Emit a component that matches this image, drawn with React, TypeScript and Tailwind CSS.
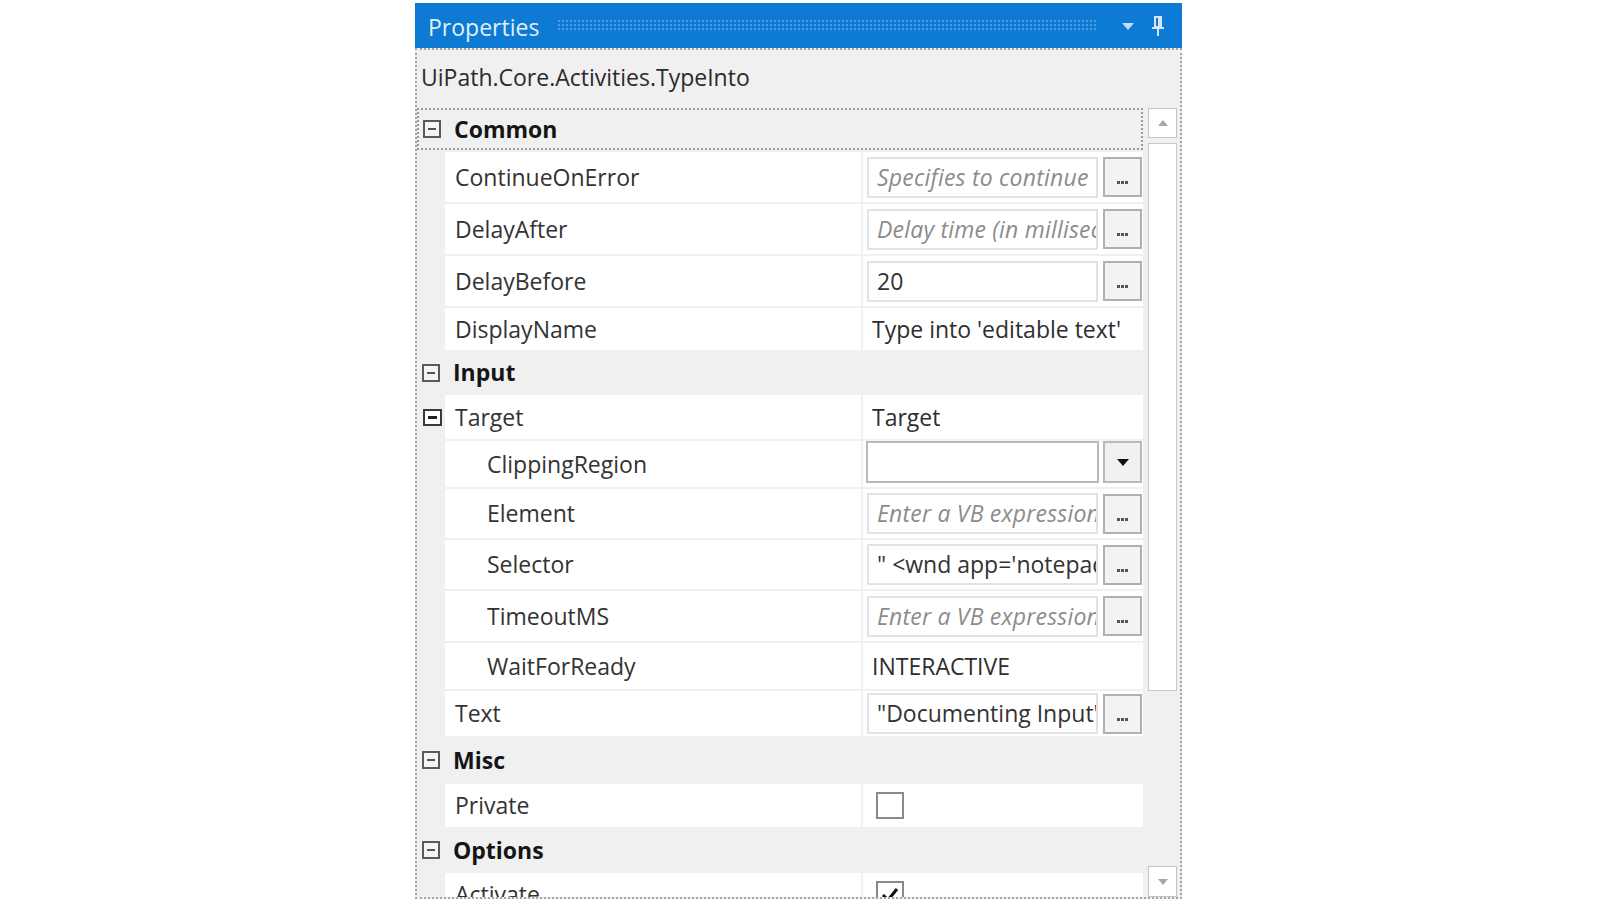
import React from 'react'

type Prop = {
  kind: 'category' | 'prop'
  label: string
  h: number
  nested?: boolean
  expander?: boolean
  focus?: boolean
  value?: React.ReactNode
}

const font = "font-['Open_Sans',sans-serif]"

function Expander({ strong }: { strong?: boolean }) {
  return (
    <div
      className={
        strong
          ? 'w-[19px] h-[17px] border-2 border-[#3a3a3a] bg-white flex items-center justify-center'
          : 'w-[18px] h-[18px] border-2 border-[#5a5a5a] bg-[#f4f4f4] flex items-center justify-center'
      }
    >
      <div className={strong ? 'w-[9px] h-[3px] bg-[#222]' : 'w-[8px] h-[2px] bg-[#555]'} />
    </div>
  )
}

function Dots() {
  return (
    <div className="w-[39px] h-[40px] ml-[5px] bg-[#f3f3f3] border-2 border-[#b0b0b0] flex items-end justify-center pb-[11px] gap-[1px] shrink-0">
      <div className="w-[3px] h-[3px] bg-[#555]" />
      <div className="w-[3px] h-[3px] bg-[#555]" />
      <div className="w-[3px] h-[3px] bg-[#555]" />
    </div>
  )
}

function TextBox({ text, placeholder }: { text: string; placeholder?: boolean }) {
  return (
    <div className="flex items-center ml-[4px]">
      <div className="w-[231px] h-[41px] bg-white border-2 border-[#e3e3e3] pl-[8px] flex items-center overflow-hidden whitespace-nowrap">
        <span className={placeholder ? 'italic text-[#8c8c8c] tracking-[0.2px]' : 'text-[#333]'}>{text}</span>
      </div>
      <Dots />
    </div>
  )
}

function Combo() {
  return (
    <div className="flex items-start ml-[3px] self-start">
      <div className="w-[233px] h-[42px] bg-white border-2 border-[#b9b9b9]" />
      <div className="w-[39px] h-[42px] ml-[4px] bg-[#f1f1f1] border-2 border-[#b9b9b9] flex items-center justify-center">
        <svg width="12" height="7" viewBox="0 0 12 7">
          <path d="M0 0 L12 0 L6 7 Z" fill="#111" />
        </svg>
      </div>
    </div>
  )
}

function Check({ checked }: { checked?: boolean }) {
  return (
    <div className="ml-[13px] w-[28px] h-[27px] bg-white border-2 border-[#8a8a8a] flex items-center justify-center">
      {checked && (
        <svg width="20" height="18" viewBox="0 0 20 18">
          <path d="M3 9 L8 14 L17 3" fill="none" stroke="#111" strokeWidth="3" />
        </svg>
      )}
    </div>
  )
}

function Plain({ text }: { text: string }) {
  return <span className="pl-[9px] text-[#2e2e2e] whitespace-nowrap overflow-hidden">{text}</span>
}

const rows: Prop[] = [
  { kind: 'category', label: 'Common', h: 42, focus: true },
  { kind: 'prop', label: 'ContinueOnError', h: 50, value: <TextBox text="Specifies to continue" placeholder /> },
  { kind: 'prop', label: 'DelayAfter', h: 50, value: <TextBox text="Delay time (in milliseconds)" placeholder /> },
  { kind: 'prop', label: 'DelayBefore', h: 50, value: <TextBox text="20" /> },
  { kind: 'prop', label: 'DisplayName', h: 42, value: <Plain text="Type into 'editable text'" /> },
  { kind: 'category', label: 'Input', h: 41 },
  { kind: 'prop', label: 'Target', h: 44, expander: true, value: <Plain text="Target" /> },
  { kind: 'prop', label: 'ClippingRegion', h: 46, nested: true, value: <Combo /> },
  { kind: 'prop', label: 'Element', h: 49, nested: true, value: <TextBox text="Enter a VB expression" placeholder /> },
  { kind: 'prop', label: 'Selector', h: 49, nested: true, value: <TextBox text={"\" <wnd app='notepad.exe' />"} /> },
  { kind: 'prop', label: 'TimeoutMS', h: 50, nested: true, value: <TextBox text="Enter a VB expression" placeholder /> },
  { kind: 'prop', label: 'WaitForReady', h: 46, nested: true, value: <Plain text="INTERACTIVE" /> },
  { kind: 'prop', label: 'Text', h: 45, value: <TextBox text={'"Documenting Input"'} /> },
  { kind: 'category', label: 'Misc', h: 44 },
  { kind: 'prop', label: 'Private', h: 43, value: <Check /> },
  { kind: 'category', label: 'Options', h: 42 },
  { kind: 'prop', label: 'Activate', h: 43, value: <Check checked /> },
]

function GridRow({ row }: { row: Prop }) {
  if (row.kind === 'category') {
    return (
      <div
        style={{ height: row.h }}
        className={
          row.focus
            ? 'flex items-center shrink-0 border-2 border-dotted border-[#9a9a9a] pl-[4px]'
            : 'flex items-center shrink-0 pl-[5px]'
        }
      >
        <Expander />
        <span className="ml-[13px] font-bold text-[#151515]">{row.label}</span>
      </div>
    )
  }
  return (
    <div style={{ height: row.h }} className="flex shrink-0">
      <div className="w-[28px] flex items-center pl-[6px]">{row.expander && <Expander strong />}</div>
      <div className={'w-[416px] bg-white flex items-center text-[#333] ' + (row.nested ? 'pl-[42px]' : 'pl-[10px]')}>
        {row.label}
      </div>
      <div className="w-[280px] ml-[2px] bg-white flex items-center overflow-hidden">{row.value}</div>
    </div>
  )
}

export default function App() {
  return (
    <div className={'w-[1600px] h-[900px] bg-white overflow-hidden text-[23px] ' + font}>
      <div className="ml-[415px] pt-[3px] w-[767px] h-[899px] flex flex-col">
        {/* title bar */}
        <div className="h-[45px] bg-[#0d7ad3] flex items-center pl-[13px] pr-[18px] shrink-0">
          <span className="text-[#e3eefa] text-[23px] leading-none pt-[3px]">Properties</span>
          <div className="flex-1 ml-[18px] h-[13px] bg-[radial-gradient(circle,#4d9be0_1.2px,transparent_1.6px)] bg-[length:4px_4px]" />
          <svg className="ml-[24px]" width="12" height="8" viewBox="0 0 12 8">
            <path d="M0 1 L12 1 L6 8 Z" fill="#c6def5" />
          </svg>
          <svg className="ml-[18px]" width="12" height="20" viewBox="0 0 12 20">
            <rect x="3" y="1" width="6" height="10" fill="none" stroke="#d4e6f8" strokeWidth="2" />
            <rect x="6" y="2" width="2" height="8" fill="#d4e6f8" />
            <rect x="0" y="11" width="12" height="2" fill="#d4e6f8" />
            <rect x="5" y="13" width="2" height="7" fill="#d4e6f8" />
          </svg>
        </div>

        {/* body */}
        <div className="flex-1 flex flex-col bg-[#f0f0f0] border-2 border-dotted border-[#a4a4a4] overflow-hidden">
          <div className="h-[58px] shrink-0 flex items-center pl-[4px] pb-[4px] text-[#2b2b2b]">UiPath.Core.Activities.TypeInto</div>

          <div className="flex-1 flex overflow-hidden">
            <div className="w-[726px] flex flex-col gap-[2px] overflow-hidden">
              {rows.map((r) => (
                <GridRow key={r.label} row={r} />
              ))}
            </div>

            {/* scrollbar */}
            <div className="w-[29px] ml-[5px] flex flex-col">
              <div className="h-[30px] bg-white border border-[#c4c4c4] flex items-center justify-center shrink-0">
                <svg width="10" height="6" viewBox="0 0 10 6">
                  <path d="M0 6 L10 6 L5 0 Z" fill="#a6a6a6" />
                </svg>
              </div>
              <div className="h-[548px] mt-[5px] bg-white border border-[#c8c8c8] shrink-0" />
              <div className="flex-1" />
              <div className="h-[31px] bg-white border border-[#c4c4c4] flex items-center justify-center shrink-0">
                <svg width="10" height="6" viewBox="0 0 10 6">
                  <path d="M0 0 L10 0 L5 6 Z" fill="#a6a6a6" />
                </svg>
              </div>
            </div>
          </div>
        </div>
      </div>
    </div>
  )
}
